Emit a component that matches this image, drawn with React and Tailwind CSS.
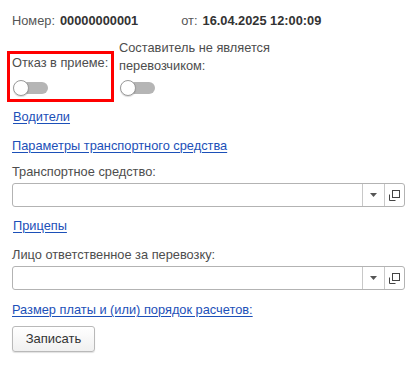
import React from "react";

function Toggle() {
  return (
    <div className="relative w-[35px] h-[16px]">
      <div className="absolute left-[8px] right-0 top-[2px] h-[12px] rounded-full bg-[#b5b5b5]" />
      <div className="absolute left-0 top-0 w-[16px] h-[16px] rounded-full bg-white border border-[#9a9a9a] shadow-[0_1px_1px_rgba(0,0,0,0.15)]" />
    </div>
  );
}

function InputField() {
  return (
    <div className="flex h-[24px] w-[393px] border border-[#b3b3b3] rounded-[3px] bg-white">
      <div className="flex-1" />
      <div className="w-[22px] border-l border-[#c8c8c8] flex items-center justify-center">
        <svg width="7" height="4" viewBox="0 0 7 4">
          <path d="M0 0 H7 L3.5 4 Z" fill="#555" />
        </svg>
      </div>
      <div className="w-[20px] border-l border-[#c8c8c8] flex items-center justify-center">
        <svg width="11" height="11" viewBox="0 0 11 11" fill="none" stroke="#444" strokeWidth="1">
          <rect x="3.5" y="0.5" width="7" height="7" />
          <path d="M0.5 4.5 V10.5 H6.5" />
        </svg>
      </div>
    </div>
  );
}

function Link({ children, className = "" }) {
  return (
    <div className={`leading-[18px] ${className}`}>
      <span className="text-[#1c50b8] underline underline-offset-[2px] decoration-[1px]">{children}</span>
    </div>
  );
}

export default function App() {
  return (
    <div className="w-[409px] h-[366px] bg-white text-[12.8px] text-[#4d4d4d] font-['Liberation_Sans'] pl-[12px] pt-[12px]">
      {/* Header */}
      <div className="flex leading-[18px] whitespace-nowrap">
        <span className="text-[#555]">Номер:</span>
        <span className="ml-[5px] font-bold text-[#333]">00000000001</span>
        <span className="ml-[43px] text-[#555]">от:</span>
        <span className="ml-[5px] font-bold text-[#333]">16.04.2025 12:00:09</span>
      </div>

      {/* Toggles */}
      <div className="flex items-start mt-[9px] -ml-[5px]">
        <div className="mt-[12px] border-[3px] border-[#ff0000] pl-[2px] pb-[3px] w-[107px] whitespace-nowrap">
          <div className="leading-[18px]">Отказ в приеме:</div>
          <div className="mt-[8px] ml-[1px]">
            <Toggle />
          </div>
        </div>
        <div className="ml-[5px]">
          <div className="leading-[18px] whitespace-nowrap">
            Составитель не является
            <br />
            перевозчиком:
          </div>
          <div className="mt-[5px] ml-[1px]">
            <Toggle />
          </div>
        </div>
      </div>

      <Link className="mt-[6px] ml-[1px]">Водители</Link>
      <Link className="mt-[11px]">Параметры транспортного средства</Link>

      <div className="mt-[8px] leading-[18px]">Транспортное средство:</div>
      <div className="mt-[2px]">
        <InputField />
      </div>

      <Link className="mt-[10px] ml-[1px]">Прицепы</Link>

      <div className="mt-[11px] leading-[18px]">Лицо ответственное за перевозку:</div>
      <div className="mt-[2px]">
        <InputField />
      </div>

      <Link className="mt-[11px]">Размер платы и (или) порядок расчетов:</Link>

      <button className="mt-[7px] w-[83px] h-[26px] border border-[#b9b9b9] rounded-[3px] bg-gradient-to-b from-white to-[#f0f0f0] shadow-[0_1px_1px_rgba(0,0,0,0.12)] text-[#333] text-[13px] leading-[18px]">
        Записать
      </button>
    </div>
  );
}
